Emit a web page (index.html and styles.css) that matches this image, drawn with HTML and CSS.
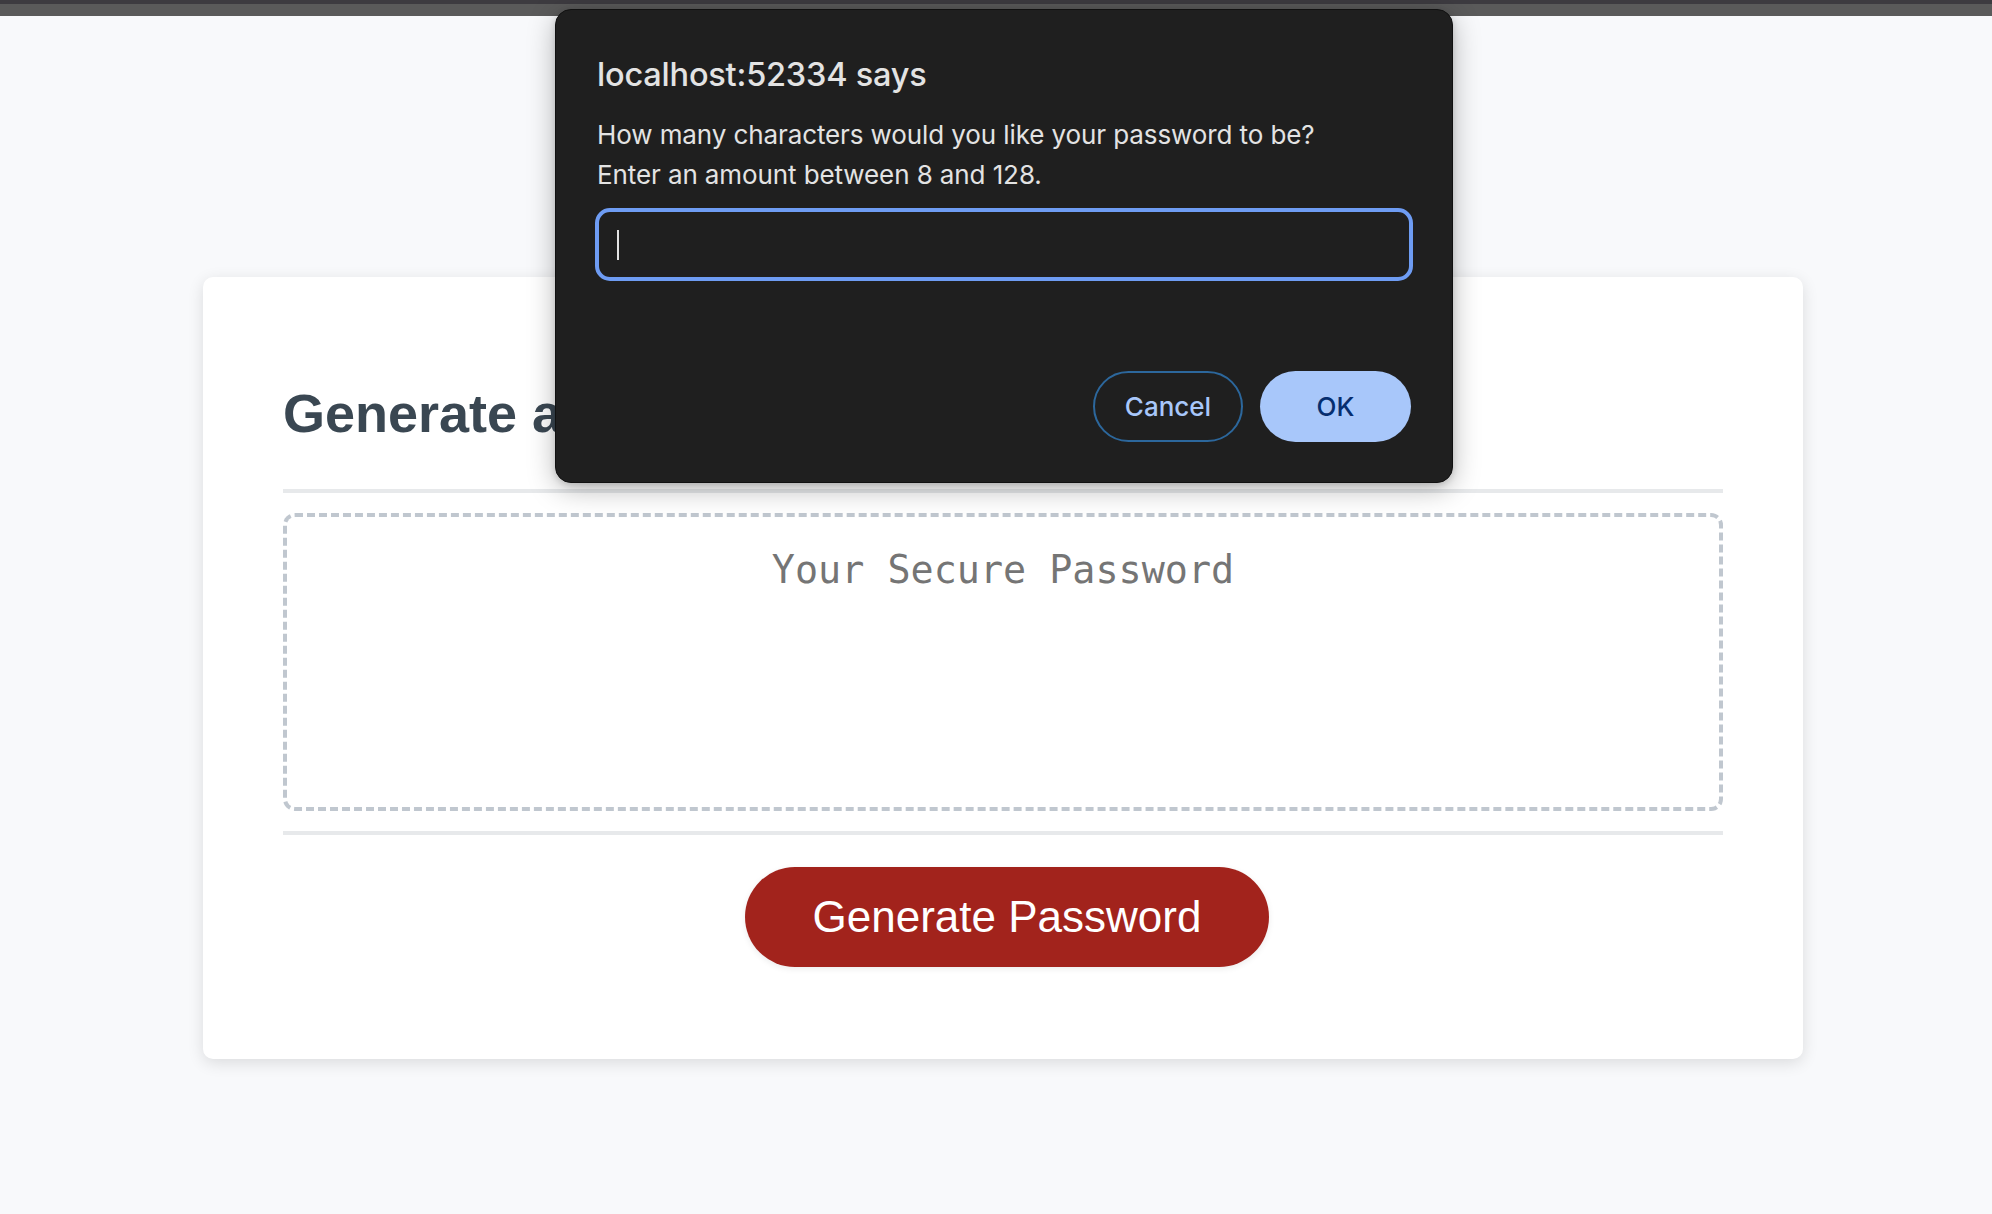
FILE: index.html
```html
<!DOCTYPE html>
<html lang="en">
<head>
<meta charset="utf-8">
<title>Password Generator</title>
<link rel="stylesheet" href="styles.css">
</head>
<body>
<div class="chrome-strip"></div>
<div class="wrapper">
  <header class="page-header"></header>
  <div class="card">
    <div class="card-header">
      <h2 class="card-title">Generate a Password</h2>
    </div>
    <div class="card-body">
      <textarea readonly class="password" placeholder="Your Secure Password" aria-label="Generated Password"></textarea>
    </div>
    <div class="card-footer">
      <button class="btn" type="button">Generate Password</button>
    </div>
  </div>
</div>

<div class="dialog" role="dialog">
  <div class="dialog-title">localhost:52334 says</div>
  <div class="dialog-message">
    <div>How many characters would you like your password to be?</div>
    <div>Enter an amount between 8 and 128.</div>
  </div>
  <div class="dialog-input"><span class="caret"></span></div>
  <div class="dialog-actions">
    <button class="dbtn dbtn-cancel" type="button">Cancel</button>
    <button class="dbtn dbtn-ok" type="button">OK</button>
  </div>
</div>
</body>
</html>
```

FILE: styles.css
```css
*, *::before, *::after { box-sizing: border-box; }

html, body { margin: 0; padding: 0; }

body {
  background: #f8f9fb;
  font-family: "Liberation Sans", Arial, sans-serif;
  min-height: 1214px;
  position: relative;
}

.chrome-strip {
  height: 16px;
  background: #5a5a5a;
  border-top: 4px solid #3d3b40;
}

.wrapper {
  padding: 60px 40px 0 54px;
}

.page-header {
  height: 201px;
}

.card {
  max-width: 1600px;
  margin: 0 auto;
  background: #ffffff;
  border-radius: 10px;
  box-shadow: 0 4px 16px rgba(0, 0, 0, 0.12);
  color: #3a4752;
  padding: 60px 80px;
}

.card-title {
  margin: 45px 0;
  font-size: 54px;
  line-height: 62px;
  font-weight: 700;
}

.card-header::after,
.card-footer::before {
  content: "";
  display: block;
  height: 4px;
  background: #e7e9eb;
}

.password {
  display: block;
  width: 100%;
  height: 298px;
  margin: 20px 0;
  padding: 31px 30px 0;
  border: 4px dashed #c0c7cf;
  border-radius: 12px;
  resize: none;
  overflow: hidden;
  font-family: "DejaVu Sans Mono", "Liberation Mono", monospace;
  font-size: 38.4px;
  line-height: 44.7px;
  text-align: center;
  background: #ffffff;
  outline: none;
}

.password::placeholder { color: #757575; }

.card-footer { text-align: center; }

.btn {
  display: inline-block;
  margin: 32px 32px 32px 40px;
  padding: 28px 68px;
  border: none;
  border-radius: 50px;
  background: #a2231c;
  color: #ffffff;
  font-family: "Liberation Sans", Arial, sans-serif;
  font-size: 44px;
  line-height: 44px;
  box-shadow: 0 2px 6px rgba(0, 0, 0, 0.08);
}

/* Browser prompt overlay */
.dialog {
  position: absolute;
  left: 555px;
  top: 9px;
  width: 898px;
  height: 474px;
  padding: 0 41px 0 41px;
  background: #1f1f1f;
  border-radius: 16px;
  border: 1px solid #111111;
  box-shadow: 0 6px 28px rgba(0, 0, 0, 0.28), 0 2px 6px rgba(0, 0, 0, 0.15);
  color: #e3e3e3;
  font-family: Inter, "Noto Sans", sans-serif;
}

.dialog-title {
  margin-top: 45px;
  height: 40px;
  line-height: 40px;
  font-size: 32.5px;
  font-weight: 500;
  letter-spacing: -0.2px;
}

.dialog-message {
  margin-top: 20px;
  font-size: 26px;
  line-height: 40px;
  letter-spacing: -0.1px;
}

.dialog-input {
  margin-top: 13px;
  height: 73px;
  margin-left: -2px;
  margin-right: -2px;
  border: 4px solid #6e9cf3;
  border-radius: 15px;
  display: flex;
  align-items: center;
  padding-left: 18px;
}

.caret {
  display: block;
  width: 2px;
  height: 30px;
  background: #e3e3e3;
}

.dialog-actions {
  margin-top: 90px;
  display: flex;
  justify-content: flex-end;
  gap: 17px;
}

.dbtn {
  height: 71px;
  border-radius: 36px;
  font-family: Inter, "Noto Sans", sans-serif;
  font-size: 26px;
  font-weight: 500;
  padding: 0;
}

.dbtn-cancel {
  width: 150px;
  background: transparent;
  border: 2px solid #2c679c;
  color: #a8c7fa;
}

.dbtn-ok {
  width: 151px;
  background: #a8c7fa;
  border: none;
  color: #062e6f;
}
```
